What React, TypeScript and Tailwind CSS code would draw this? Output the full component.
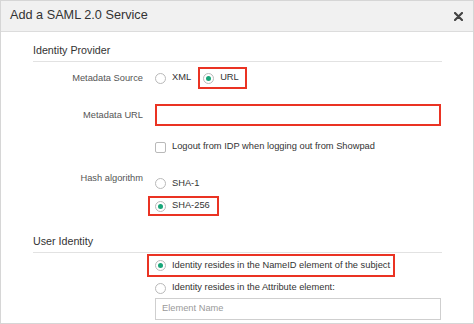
const font = { fontFamily: '"Liberation Sans", Arial, Helvetica, sans-serif' };

const Radio = ({ checked = false }: { checked?: boolean }) => (
  <span className="flex h-[11px] w-[11px] shrink-0 items-center justify-center rounded-full border border-[#b9b9b9] bg-white">
    {checked && <span className="h-[5px] w-[5px] rounded-full bg-[#18a679]" />}
  </span>
);

const Option = ({ label, checked }: { label: string; checked?: boolean }) => (
  <span className="flex items-center gap-[6px]">
    <Radio checked={checked} />
    <span className="text-[9.3px] text-[#333]">{label}</span>
  </span>
);

const Label = ({ children }: { children: string }) => (
  <div className="w-[111px] shrink-0 pr-[1px] text-right text-[9.3px] leading-[11px] text-[#555]">{children}</div>
);

export default function App() {
  return (
    <div className="h-[324px] w-[474px] overflow-hidden bg-white" style={font}>
      <div className="flex h-[324px] flex-col border border-[#d6d6d6]">
        <div className="flex h-[31px] shrink-0 items-center justify-between border-b border-[#dcdcdc] bg-[#f1f1f1] pl-[9px] pr-[10px]">
          <span className="text-[12.7px] text-[#333]">Add a SAML 2.0 Service</span>
          <svg width="9" height="9" viewBox="0 0 9 9" className="mt-[1px]">
            <path d="M1 1 L8 8 M8 1 L1 8" stroke="#444" strokeWidth="2.2" strokeLinecap="round" />
          </svg>
        </div>

        <div className="flex flex-col pl-[32px] pr-[31px]">
          <div className="flex h-[30px] items-end border-b border-[#e2e2e2] pb-[5px] text-[10.7px] leading-[12px] text-[#333]">
            Identity Provider
          </div>

          <div className="mt-[5px] flex h-[22px] items-center gap-[11px]">
            <Label>Metadata Source</Label>
            <div className="flex items-center">
              <Option label="XML" />
              <span className="ml-[7px] flex h-[22px] items-center border-2 border-[#ea3323] pl-[3px] pr-[6px]">
                <Option label="URL" checked />
              </span>
            </div>
          </div>

          <div className="mt-[15px] flex items-center gap-[11px]">
            <Label>Metadata URL</Label>
            <div className="h-[22px] w-[286px] border-2 border-[#ea3323] bg-white" />
          </div>

          <div className="mt-[15px] flex h-[12px] items-center gap-[11px]">
            <div className="w-[111px] shrink-0" />
            <span className="flex items-center gap-[6px]">
              <span className="h-[11px] w-[11px] rounded-[2px] border border-[#b9b9b9] bg-white" />
              <span className="text-[9.3px] text-[#333]">Logout from IDP when logging out from Showpad</span>
            </span>
          </div>

          <div className="mt-[19px] flex gap-[11px]">
            <div className="pt-[1px]">
              <Label>Hash algorithm</Label>
            </div>
            <div className="flex flex-col">
              <div className="flex h-[23px] items-center">
                <Option label="SHA-1" />
              </div>
              <span className="ml-[-7px] mt-[1px] flex h-[20px] w-fit items-center border-2 border-[#ea3323] pl-[5px] pr-[7px]">
                <Option label="SHA-256" checked />
              </span>
            </div>
          </div>

          <div className="flex h-[37px] items-end border-b border-[#e2e2e2] pb-[5px] text-[10.7px] leading-[12px] text-[#333]">
            User Identity
          </div>

          <div className="flex flex-col pl-[122px]">
            <span className="ml-[-8px] mt-[1px] flex h-[23px] w-fit items-center border-2 border-[#ea3323] pl-[6px] pr-[3px]">
              <Option label="Identity resides in the NameID element of the subject" checked />
            </span>
            <div className="flex h-[21px] items-center pt-[1px]">
              <Option label="Identity resides in the Attribute element:" />
            </div>
            <div className="flex h-[22px] w-[286px] items-center border border-[#cfcfcf] bg-white pl-[6px] text-[9.3px] text-[#9a9a9a]">
              Element Name
            </div>
          </div>
        </div>
      </div>
    </div>
  );
}
